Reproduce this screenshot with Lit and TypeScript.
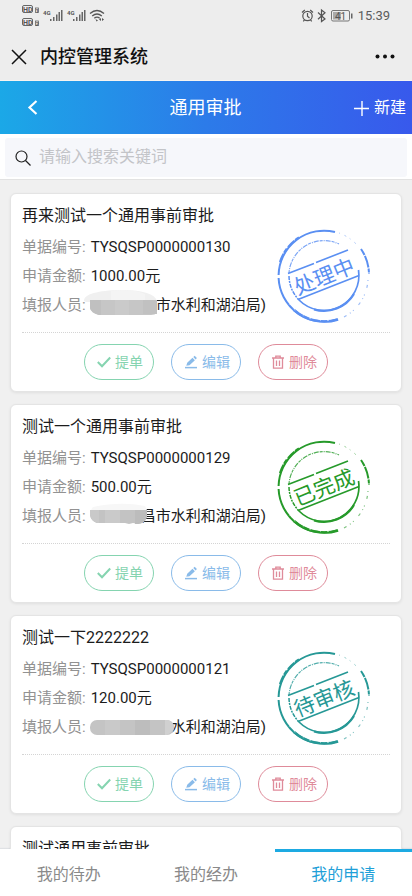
import { LitElement, html, css, svg, nothing } from "lit";
import { customElement, property, state } from "lit/decorators.js";
import { classMap } from "lit/directives/class-map.js";

type Status = "processing" | "done" | "pending";

interface Details {
  code: string;
  amount: string;
  mask: "wide" | "short" | "long";
  person: string;
  status: Status;
}

interface Application {
  title: string;
  details?: Details;
}

const STATUS_TEXT: Record<Status, string> = {
  processing: "处理中",
  done: "已完成",
  pending: "待审核",
};

const APPLICATIONS: Application[] = [
  {
    title: "再来测试一个通用事前审批",
    details: { code: "TYSQSP0000000130", amount: "1000.00元", mask: "wide", person: "市水利和湖泊局)", status: "processing" },
  },
  {
    title: "测试一个通用事前审批",
    details: { code: "TYSQSP0000000129", amount: "500.00元", mask: "short", person: "昌市水利和湖泊局)", status: "done" },
  },
  {
    title: "测试一下2222222",
    details: { code: "TYSQSP0000000121", amount: "120.00元", mask: "long", person: "水利和湖泊局)", status: "pending" },
  },
  { title: "测试通用事前审批" },
];

/* Pixelated patches that hide part of a name. */
const MASKS = {
  wide: svg`
    <path d="M-7 9C-6 2 12-1 32-1S64 3 66 10L66 11H-3Q-7 11-7 9Z" fill="#f0f0f0"/>
    <path d="M20 0Q40-3 54 3V10H20Z" fill="#f4f4f4"/>
    <path d="M-1 9H66V22Q64 24 60 24H8Q0 22-1 17Z" fill="#c6c6c6"/>
    <path d="M-1 9H10V24H8Q0 22-1 17Z" fill="#c0c0c0"/>
    <rect x="24" y="9" width="14" height="15" fill="#cacaca"/>
    <rect x="52" y="9" width="14" height="14" fill="#c1c1c1"/>`,
  short: svg`
    <path d="M2 5Q30-1 54 4L56 8H0Z" fill="#f7f7f7"/>
    <path d="M-1 8H56V15Q54 21 47 22L42 21 38 22 34 21H6Q0 19-1 13Z" fill="#c3c3c3"/>
    <path d="M-1 8H8V21H6Q0 19-1 13Z" fill="#c9c9c9"/>
    <rect x="14" y="8" width="15" height="13" fill="#cacaca"/>
    <path d="M44 8H56V15Q54 21 47 22H44Z" fill="#bcbcbc"/>`,
  long: svg`
    <rect x="-1" y="7" width="84" height="15" rx="7" fill="#c4c4c4"/>
    <rect x="14" y="7" width="15" height="15" fill="#c9c9c9"/>
    <rect x="44" y="7" width="15" height="15" fill="#bdbdbd"/>
    <path d="M74 7H77Q82 9 83 14Q83 18 76 22H74Z" fill="#d0d0d0"/>`,
};

@customElement("status-stamp")
class StatusStamp extends LitElement {
  @property() status: Status = "processing";

  static styles = css`
    :host { display: block; }
    .stamp { display: block; width: 96px; height: 96px; fill: none; stroke: currentColor; }
    .processing { color: #5a8ff2; }
    .done { color: #269a2a; }
    .pending { color: #269896; }
    .wear { stroke: #fff; }
    .word {
      fill: currentColor; stroke: none; font-size: 21px;
      font-family: "Noto Sans CJK SC", sans-serif;
    }
  `;

  render() {
    return html`
      <svg class="stamp ${this.status}" viewBox="-48 -48 96 96" role="img" aria-label=${STATUS_TEXT[this.status]}>
        <path d="M11-44A45.400 45.400 0 0 0-45.400-1" stroke-width="2"/>
        <path d="M-45.400 2A45.400 45.400 0 0 0 14 43.200" stroke-width="2"/>
        <path d="M-30 34A45.400 45.400 0 0 0 14 43.400" stroke-width="2.600"/>
        <path d="M-44-14A46 46 0 0 1-25-38.600" stroke-width="2.200" stroke-dasharray="9 1 5 2"/>
        <path d="M37-27A45.800 45.800 0 0 1 45-2" stroke-width="2" stroke-dasharray="7 1 12 1 4 1"/>
        <path d="M15-43A45.500 45.500 0 0 1 34-30" stroke-width="1" stroke-dasharray="1 5 2 4" opacity=".5"/>
        <path d="M44 4A45 45 0 0 1 20 41" stroke-width="1.200" stroke-dasharray="1 4 3 7 1 3" opacity=".6"/>
        <path d="M-35-3A35 35 0 0 1 15-32" stroke-width="1.200" stroke-dasharray="3 1 1 1 5 1" opacity=".8"/>
        <path d="M-35 0A35 35 0 0 0-25 24" stroke-width="1.500" stroke-dasharray="4 1 2 1"/>
        <path d="M-25 24A35 35 0 0 0 34.500-6" stroke-width="1.700"/>
        <path d="M-10 33.500A35 35 0 0 0 30 18" stroke-width="2.200"/>
        <path class="wear" d="M-35 28A45 45 0 0 0 20 40" stroke-width=".500" stroke-dasharray="1 6 2 9"/>
        <path d="M-36-2.500L-10-12.500M-8-13.500L24-26M-26 23.500L35-.5" stroke-width="1.600"/>
        <text class="word" x="0" y="8" text-anchor="middle" transform="rotate(-22)">${STATUS_TEXT[this.status]}</text>
      </svg>`;
  }
}

@customElement("application-card")
class ApplicationCard extends LitElement {
  @property({ attribute: false }) item!: Application;

  static styles = css`
    :host { display: block; }
    .card {
      position: relative; box-sizing: border-box; background: #fff;
      border: 1px solid #e4e4e4; border-radius: 6px; padding: 6px 11px 11px;
      box-shadow: 0 1px 3px rgba(0, 0, 0, .07);
    }
    .title { margin: 0; font-size: 16px; line-height: 32px; font-weight: 400; color: #1c1c1c; }
    .fields { margin: 1px 0 0; font-size: 15px; line-height: 29px; }
    .row { display: flex; gap: 5px; }
    .row dt { color: #929292; }
    .row dd { margin: 0; display: flex; color: #1c1c1c; }
    .mask { position: relative; height: 29px; }
    .mask.wide { width: 65px; }
    .mask.short { width: 50px; }
    .mask.long { width: 80px; }
    .patch { position: absolute; inset: 0; width: 100%; height: 100%; overflow: visible; }
    .stamp { position: absolute; right: 29px; top: 34px; }
    .actions {
      display: flex; justify-content: center; gap: 17px;
      margin-top: 12px; padding-top: 11px; border-top: 1px dotted #d4d4d4;
    }
    .action {
      box-sizing: border-box; width: 70px; height: 36px; padding: 0 0 0 2px;
      display: flex; align-items: center; justify-content: center; gap: 4px;
      border: 1px solid currentColor; border-radius: 18px; background: #fff;
      font: inherit; font-size: 14px; line-height: 20px;
    }
    .icon { width: 14px; height: 14px; flex: none; fill: none; stroke: currentColor; }
    .submit { color: #85d4b0; }
    .edit { color: #8abbe9; }
    .delete { color: #df8b9a; }
  `;

  private renderDetails({ code, amount, mask, person, status }: Details) {
    return html`
      <dl class="fields">
        <div class="row"><dt>单据编号:</dt><dd>${code}</dd></div>
        <div class="row"><dt>申请金额:</dt><dd>${amount}</dd></div>
        <div class="row">
          <dt>填报人员:</dt>
          <dd><span class="mask ${mask}"><svg class="patch" aria-hidden="true">${MASKS[mask]}</svg></span>${person}</dd>
        </div>
      </dl>
      <status-stamp class="stamp" .status=${status}></status-stamp>
      <div class="actions">
        <button class="action submit" type="button">
          <svg class="icon" viewBox="0 0 14 14"><path d="M.8 7L5 11.200 13.200 2.500" stroke-width="2"/></svg>提单
        </button>
        <button class="action edit" type="button">
          <svg class="icon" viewBox="0 0 14 14"><path d="M1 12.600H13" stroke-width="1.500"/><path d="M2.300 10.800L3.200 7.800 8.500 2.800 10.900 5.200 5.500 10.200ZM9.300 2.100L10.700.8 12.900 3 11.600 4.400Z" fill="currentColor" stroke="none"/></svg>编辑
        </button>
        <button class="action delete" type="button">
          <svg class="icon" viewBox="0 0 14 14"><path d="M1 3H13M4.800 3V1.200H9.200V3M2.500 3V13.200H11.500V3M5.500 5.500V11M8.500 5.500V11" stroke-width="1.300"/></svg>删除
        </button>
      </div>`;
  }

  render() {
    const { title, details } = this.item;
    return html`
      <article class="card">
        <h2 class="title">${title}</h2>
        ${details ? this.renderDetails(details) : nothing}
      </article>`;
  }
}

@customElement("phone-status")
class PhoneStatus extends LitElement {
  static styles = css`
    :host { display: block; }
    .bar { display: flex; justify-content: space-between; height: 32px; padding: 0 22px; color: #5c5c5c; }
    .left { width: 86px; height: 32px; }
    .right { display: flex; align-items: center; gap: 5px; font-size: 13px; line-height: 32px; }
    .system { width: 53px; height: 32px; }
    .tiny { font: 700 6px Roboto, sans-serif; fill: #555; }
    .badge { font: 700 7px Roboto, sans-serif; fill: #555; }
    .level { font: 400 10px Roboto, sans-serif; fill: #555; }
  `;

  private signal(x: number) {
    return svg`<g transform="translate(${x} 0)" fill="#666">
      <rect x="0" y="19" width="1.500" height="2"/><rect x="3" y="17" width="1.500" height="4"/>
      <rect x="6" y="14.500" width="1.500" height="6.500"/><rect x="8.500" y="12" width="1.500" height="9"/>
      <rect x="11" y="10" width="1.500" height="11"/></g>`;
  }

  private hd(y: number, slot: string) {
    return svg`<g transform="translate(0 ${y})">
      <rect x=".5" y=".5" width="10" height="7" rx="1.500" fill="none" stroke="#666"/>
      <text class="badge" x="1" y="6.500">HD</text>
      <rect x="13.500" y="3" width="3" height="4.500" fill="none" stroke="#666" stroke-width=".8"/>
      <text class="tiny" x="13.500" y="7.500">${slot}</text></g>`;
  }

  render() {
    return html`
      <div class="bar">
        <svg class="left" viewBox="0 0 86 32" role="img" aria-label="信号">
          ${this.hd(5, "1")}${this.hd(18, "2")}
          <text class="tiny" x="21" y="14.500">4G</text>${this.signal(28)}
          <text class="tiny" x="45" y="14.500">4G</text>${this.signal(51)}
          <g fill="none" stroke="#555" stroke-width="1.300">
            <path d="M68 13.500Q75 7.500 82 13.500M70.200 16Q75 12 79.800 16M72.300 18.300Q75 16 77.700 18.300"/>
          </g>
          <path d="M73.500 19L76 20.500 74.500 21.500ZM77 19.500L79 18V21ZM82 19.500L80 18V21Z" fill="#555"/>
        </svg>
        <div class="right">
          <svg class="system" viewBox="0 0 53 32" role="img" aria-label="电量 41">
            <g fill="none" stroke="#555" stroke-width="1.200">
              <circle cx="7.500" cy="16" r="4.700"/><path d="M7.500 13V16.300L9.500 18M2 12.500L4.800 10M13 12.500L10.200 10M4.500 19.800L3.300 21.300M10.500 19.800L11.700 21.300"/>
              <path d="M18 12.500L25 19 21.500 21.500V10L25 12.700 18 19.200"/>
              <rect x="31.500" y="10.500" width="18" height="10.500" rx="1.500" stroke="#777" stroke-width="1"/>
            </g>
            <rect x="33" y="12" width="8" height="7.500" fill="#aaa"/>
            <rect x="51" y="13.500" width="1.500" height="5" fill="#666"/>
            <text class="level" x="35" y="19.500">41</text>
          </svg>
          <span>15:39</span>
        </div>
      </div>`;
  }
}

@customElement("app-root")
class AppRoot extends LitElement {
  @state() private tab = 2;

  static styles = css`
    :host {
      display: flex; flex-direction: column; height: 100vh; overflow: hidden;
      background: #f0f0f0; color: #1c1c1c;
      font-family: Roboto, "Noto Sans CJK SC", sans-serif;
    }
    .system { background: #ededed; flex: none; border-bottom: 1px solid #f7f4f0; }
    .window { box-sizing: border-box; display: flex; align-items: center; height: 48px; padding: 2px 17px 0 11px; }
    .plain {
      border: 0; padding: 0; background: none; color: inherit;
      font: inherit; line-height: 24px; display: flex; align-items: center;
    }
    .name { flex: 1; margin: 0 0 0 13px; font-size: 18px; line-height: 24px; font-weight: 500; color: #111; }
    .close { width: 16px; height: 16px; fill: none; stroke: #111; }
    .more { width: 20px; height: 16px; fill: #111; }
    .header {
      flex: none; display: grid; grid-template-columns: 1fr auto 1fr; align-items: center;
      height: 53px; padding: 0 6px 0 26px; color: #fff;
      background: linear-gradient(to right, #1ba8e7, #2c7be9 50%, #3859ec);
    }
    .heading { margin: 0 21px 0 0; font-size: 18px; line-height: 24px; font-weight: 400; }
    .back { width: 14px; height: 16px; fill: none; stroke: #fff; }
    .create { justify-self: end; gap: 4px; font-size: 16px; }
    .plus { width: 16px; height: 16px; fill: none; stroke: #fff; }
    .search { flex: none; padding: 4px 5px 2px; background: #fff; border-bottom: 1px solid #e2e2e2; }
    .field { display: flex; align-items: center; gap: 8px; height: 39px; padding: 0 10px; background: #f6f7fb; border-radius: 3px; }
    .lens { width: 16px; height: 16px; flex: none; fill: none; stroke: #222; }
    .input { flex: 1; min-width: 0; border: 0; padding: 0 0 2px; background: none; outline: none; font: inherit; font-size: 16px; line-height: 24px; color: #222; }
    .input::placeholder { color: #c3c4c8; opacity: 1; }
    .list {
      flex: 1; min-height: 0; overflow-y: auto; scrollbar-width: none;
      display: flex; flex-direction: column; gap: 12px; padding: 13px 10px;
    }
    .item { flex: none; }
    .tabs { flex: none; display: grid; grid-template-columns: repeat(3, 1fr); background: #fff; box-shadow: 0 -1px 1px #dfe1e4; }
    .tab {
      height: 47px; border: 0; border-top: 3px solid transparent; padding: 1px 0 0;
      background: none; font: inherit; font-size: 16px; line-height: 24px; color: #8a8a8a;
    }
    .tab.active { color: #1fa0d8; border-top-color: #1daae2; }
  `;

  render() {
    return html`
      <div class="system">
        <phone-status></phone-status>
        <div class="window">
          <button class="plain" type="button" aria-label="关闭">
            <svg class="close" viewBox="0 0 16 16"><path d="M1 1L15 15M15 1L1 15" stroke-width="1.500"/></svg>
          </button>
          <h1 class="name">内控管理系统</h1>
          <button class="plain" type="button" aria-label="更多">
            <svg class="more" viewBox="0 0 20 16"><circle cx="2.500" cy="7.500" r="2"/><circle cx="10" cy="7.500" r="2"/><circle cx="17.500" cy="7.500" r="2"/></svg>
          </button>
        </div>
      </div>
      <header class="header">
        <button class="plain" type="button" aria-label="返回">
          <svg class="back" viewBox="0 0 14 16"><path d="M10.500 1L3.500 7.500 10.500 14" stroke-width="2.200"/></svg>
        </button>
        <h2 class="heading">通用审批</h2>
        <button class="plain create" type="button">
          <svg class="plus" viewBox="0 0 16 16"><path d="M8 1V16M0 8.500H15" stroke-width="1.400"/></svg>新建
        </button>
      </header>
      <div class="search">
        <label class="field">
          <svg class="lens" viewBox="0 0 16 16"><circle cx="6.500" cy="6.500" r="5.500" stroke-width="1.200"/><path d="M10.500 10.500L15.500 15.500" stroke-width="1.300"/></svg>
          <input class="input" type="text" placeholder="请输入搜索关键词" aria-label="搜索">
        </label>
      </div>
      <main class="list">
        ${APPLICATIONS.map((item) => html`<application-card class="item" .item=${item}></application-card>`)}
      </main>
      <nav class="tabs">
        ${["我的待办", "我的经办", "我的申请"].map((label, i) => html`
          <button type="button" class=${classMap({ tab: true, active: this.tab === i })} @click=${() => (this.tab = i)}>${label}</button>`)}
      </nav>`;
  }
}
